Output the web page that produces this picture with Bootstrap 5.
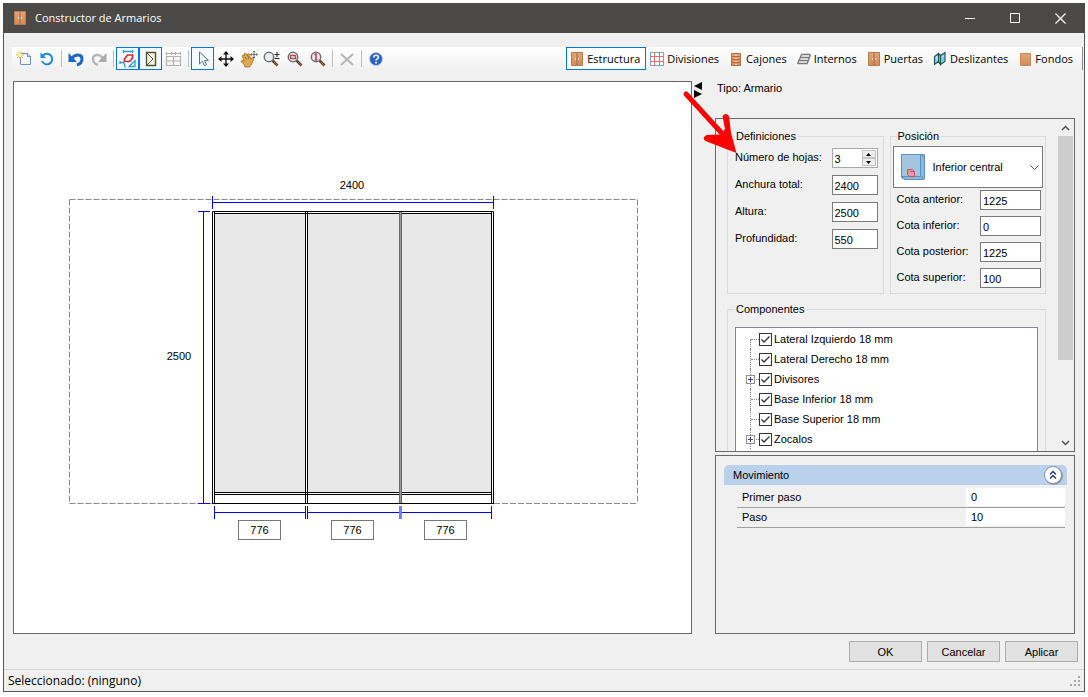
<!DOCTYPE html>
<html lang="es">
<head>
<meta charset="utf-8">
<meta name="viewport" content="width=device-width, initial-scale=1">
<title>Constructor de Armarios</title>
<link href="https://cdn.jsdelivr.net/npm/bootstrap@5.3.0/dist/css/bootstrap.min.css" rel="stylesheet">
<style>
:root{--ui:"Liberation Sans",sans-serif;--bar:"Open Sans","Noto Sans",sans-serif;--face:#f0f0f0;--edge:#686868}
body{font:11px/14px var(--ui);color:#000;background:#fff;padding:3px 3px 5px}
.app-page{height:calc(100vh - 8px);min-height:620px}
.app-window{background:var(--face);border:1px solid #555;border-top:0}
.title-bar{height:30px;margin:0 -1px;background:#4b4a48;color:#fff;font:11px/30px var(--bar);padding-left:10px}
.title-bar button{width:45px;height:30px;border:0;background:none;padding:0;line-height:0}
.title-bar button:last-child{margin-right:2px}
.tool-strip{height:23px;margin:14px 1px 11px 8px;background:linear-gradient(#fff,#f8f8f8 50%,#f0f0f0);font-family:var(--bar);font-size:11px}
.tool{width:23px;height:23px;border:1px solid transparent;background:none;padding:0;line-height:0;display:flex;align-items:center;justify-content:center}
.tool.active{border-color:#0078d7;background:#f5faff}
.sep{width:1px;height:17px;background:#bdbdbd;margin:0 2px 0 3px}
.tab{height:23px;border:1px solid transparent;background:none;padding:0 5px 0 2px;line-height:20px;display:flex;align-items:center;gap:2px;white-space:nowrap}
.tab.active{border-color:#0078d7;background:#fff}
.tab-strip{border-right:1px solid #888;padding-right:3px}
.work{padding:0 9px}
.sketch{background:#fff;border:1px solid var(--edge)}
.sketch svg{width:100%;height:100%;display:block}
.sketch text{font:11px var(--ui);text-anchor:middle}
.width-box{width:43px;height:20px;border:1px solid #777;padding:0;text-align:center;font:11px/16px var(--ui);color:#000;display:block;border-radius:0}
.splitter{width:23px;padding:1px 0 0 1px}
.side{width:360px}
.kind{height:37px;padding-left:2px}
.pane{border:1px solid var(--edge)}
.pane-top{flex:332 1 0;min-height:0}
.pane-bottom{flex:168 1 0;min-height:0;margin-top:3px;padding:9px 7px 0 8px}
.pane-scroll{padding:10px 12px 0 11px;min-width:0}
.scroller{width:15px;margin-right:1px}
.thumb{flex:0 0 224px;background:#cdcdcd}
.scroller button{border:0;background:none;padding:0;height:17px;line-height:0}
.pair{display:grid;grid-template-columns:1fr 1fr;gap:6px}
.group{border:1px solid #dcdcdc;padding:0 5px;margin:0;min-width:0}
.group legend{float:none;width:auto;font-size:11px;line-height:14px;margin:0 0 0 2px;padding:0 2px 0 1px}
.pair .group{height:165px}
.group-pos{padding:0 2px}
.fields{display:grid;gap:7px 0;grid-template-columns:1fr 46px;padding:5px 0 0 2px;align-items:center}
.fields.near{gap:6px 0;grid-template-columns:1fr 61px;padding:2px 2px 0 4px}
.fields label{line-height:16px;padding-bottom:3px}
.box{width:100%;height:20px;border:1px solid #7a7a7a;border-radius:0;background:#fff;padding:1px 2px 0;font-size:11px;color:#000}
.spin{border:1px solid #aaa;background:#fff;height:20px}
.spin .box{border:0;height:18px;width:28px}
.spin-keys{width:14px;margin:1px}
.spin-keys button{flex:1;border:1px solid #c4c4c4;background:#eee;padding:0;line-height:0;display:flex;align-items:center;justify-content:center}
.place{padding-top:3px}
.place select{width:100%;height:42px;border:1px solid #7a7a7a;border-radius:0;background:#fff;appearance:none;padding:0 20px 0 39px;font-size:11px;color:#000}
.place .cube{position:absolute;left:7px;top:10px;pointer-events:none}
.place .chev{position:absolute;right:4px;top:22px;pointer-events:none}
.tree{background:#fff;border:1px solid #828790;height:170px;margin:11px 2px 0;padding:1px 0 0 9px}
.tree li{height:20px;position:relative;display:flex;align-items:center;padding-left:14px}
.tree li::before{content:"";position:absolute;left:5px;top:0;bottom:0;border-left:1px dotted #888}
.tree li:first-child::before{top:10px}
.tree li::after{content:"";position:absolute;left:6px;width:8px;top:10px;border-top:1px dotted #888}
.tree input{appearance:none;width:13px;height:13px;border:1px solid #333;margin:0 2px 0 0;background:#fff}
.tree input:checked{background:#fff url("data:image/svg+xml,%3Csvg xmlns='http://www.w3.org/2000/svg' viewBox='0 0 11 11'%3E%3Cpath d='M1.5 5.5 4 8 9.5 2.5' fill='none' stroke='%23333' stroke-width='1.3'/%3E%3C/svg%3E")}
.tree .plus{position:absolute;left:1px;top:6px;width:9px;height:9px;border:1px solid #919191;background:#fff;padding:0;line-height:0;z-index:1}
.move-head{height:20px;background:#b9d1ea;border-radius:5px 5px 0 0;padding:0 5px 0 9px}
.move-head button{width:18px;height:18px;border:1px solid #8290a8;border-radius:50%;background:#fff;padding:0;line-height:0;box-shadow:1px 1px 1px #9a9a9a}
.props{width:calc(100% - 15px);margin:2px 0 0 13px;border-collapse:collapse}
.props td,.props th{height:20px;padding:0;border-bottom:1px solid #a0a0a0;font-weight:400}
.props th{padding-left:5px}
.props td{width:99px}
.props input{width:100%;height:18px;border:0;background:#fff;padding:0 5px;display:block;color:#000}
.actions{padding:7px 6px 7px 7px;gap:5px}
.actions button{width:73px;height:21px;border:1px solid #adadad;background:#e1e1e1;padding:0;line-height:18px}
.state{border-top:1px solid #d7d7d7;height:22px;padding:0 3px 0 4px;font:12px/20px var(--bar)}
.hint-arrow{position:absolute;left:-35px;top:7px;pointer-events:none;z-index:3}
</style>
</head>
<body>
<svg width="0" height="0" class="position-absolute" aria-hidden="true">
  <defs>
    <linearGradient id="wood" x2="0" y2="1"><stop stop-color="#e5a576"/><stop offset="1" stop-color="#d28b58"/></linearGradient>
    <symbol id="closet" viewBox="0 0 16 16"><path d="M2.500 1.500h11v13h-11z" fill="url(#wood)" stroke="#b87b4c"/><path d="M8 2v12" stroke="#a7693d"/><path d="M6.500 7v2M9.500 7v2" stroke="#f7e6d4"/></symbol>
    <symbol id="lens" viewBox="0 0 16 16"><path d="m9.500 9.500 5 5" stroke="#5a4330" stroke-width="2.600"/><path d="m11 11 3 3" stroke="#9b7143"/><circle cx="6" cy="6" r="4.700" fill="#e8eef2" stroke="#6c7276" stroke-width="1.500"/></symbol>
  </defs>
</svg>
<div class="app-page d-flex flex-column">
<div class="app-window d-flex flex-column flex-grow-1">
  <header class="title-bar d-flex align-items-center">
    <svg width="14" height="16" viewBox="1 0 14 16" class="me-1"><use href="#closet" width="16" height="16"/></svg>
    <span class="flex-grow-1 ps-1">Constructor de Armarios</span>
    <button type="button" aria-label="Minimizar"><svg width="11" height="11"><path d="M0 5.500h10" stroke="#fff"/></svg></button>
    <button type="button" aria-label="Maximizar"><svg width="11" height="11"><path d="M.5.5h9v9h-9z" fill="none" stroke="#fff"/></svg></button>
    <button type="button" aria-label="Cerrar"><svg width="11" height="11"><path d="m.5.5 10 10m0-10-10 10" stroke="#fff" stroke-width="1.200"/></svg></button>
  </header>

  <nav class="tool-strip d-flex justify-content-between">
    <div class="d-flex align-items-center">
      <button class="tool" type="button" aria-label="Nuevo"><svg width="16" height="16"><path d="M4.500 2.500h7l3 3v8h-10z" fill="#f4f8ff" stroke="#6c8fc7"/><path d="M11.500 2.500v3h3" fill="#c8d8f2" stroke="#6c8fc7"/><path d="M4 0v8M0 4h8M1.200 1.200l5.600 5.600m0-5.600-5.600 5.600" stroke="#e3b520" stroke-width=".9"/><circle cx="4" cy="4" r="2" fill="#fff39a"/></svg></button>
      <button class="tool" type="button" aria-label="Restablecer"><svg width="16" height="16"><path d="M4 4.500A5.300 5.300 0 1 1 3 10" fill="none" stroke="#1787dc" stroke-width="1.900"/><path d="M1.500 1.500v5.500h5.500z" fill="#1787dc"/></svg></button>
      <span class="sep"></span>
      <button class="tool" type="button" aria-label="Deshacer"><svg width="16" height="16"><path d="M3.500 8C7 2.500 14 3 14 8c0 3-2 5-5 6" fill="none" stroke="#1c67c4" stroke-width="3"/><path d="M.5 2v9h8.500z" fill="#1c67c4"/></svg></button>
      <button class="tool" type="button" aria-label="Rehacer"><svg width="16" height="16"><path d="M12.500 8C9 2.500 2 3 2 8c0 3 2 5 5 6" fill="none" stroke="#b8b8b8" stroke-width="2.600"/><path d="M15.500 2v9H7z" fill="#aaa"/></svg></button>
      <span class="sep"></span>
      <button class="tool active" type="button" aria-label="Cotas"><svg width="18" height="18"><path d="M4 1.500h10M4.500 0v3M13.500 0v3M1 12.500h3.500l2 5M1 11v3" fill="none" stroke="#2b9fd8" stroke-width="1.300"/><path d="m5.500 9 3-4h5v3l-3 3.500h-5z" fill="#fff" stroke="#d9262d" stroke-width="1.700"/><path d="M10 16.500h6v-6z" fill="none" stroke="#2b9fd8" stroke-width="1.300"/></svg></button>
      <button class="tool active" type="button" aria-label="Apertura"><svg width="16" height="16"><path d="M3.500 1.500h9v13h-9z" fill="#f6f6e8" stroke="#4f552f" stroke-width="1.400"/><path d="m4 2 6 6-6 6" fill="none" stroke="#4f552f"/></svg></button>
      <button class="tool" type="button" aria-label="Vista de rejilla"><svg width="17" height="16"><path d="M1.500 5.500h14v9h-14zM1.500 10h14M8.500 5.500v9M1 2.500h15M1.500 1v3M6.500 1v3M10.500 1v3M15.500 1v3" fill="none" stroke="#b2b2b2" stroke-width="1.200"/></svg></button>
      <span class="sep"></span>
      <button class="tool active" type="button" aria-label="Seleccionar"><svg width="16" height="16"><path d="M4.500 1v12l3-2.800 2 4.500 2-.9-2-4.400h4z" fill="#f5faff" stroke="#59708f"/></svg></button>
      <button class="tool" type="button" aria-label="Mover"><svg width="16" height="16"><path d="M8 1v14M1 8h14" stroke="#111" stroke-width="1.400"/><path d="m8 0 3 3.500H5zM8 16l3-3.500H5zM0 8l3.500-3v6zM16 8l-3.500-3v6z" fill="#111"/></svg></button>
      <button class="tool" type="button" aria-label="Desplazar"><svg width="18" height="18"><path d="M3 8 2 6q1-1.500 2.500 0L4 4q1.500-1.500 2.500 0l1 2V4q1.500-1 2.200.5L10.500 9l2-1.500q2 0 1.200 1.500l-2 5-2 3H5L4 14.500l-3-3q0-2 3-.5z" fill="#dfa653" stroke="#a87833" stroke-width=".9"/><path d="m5 7 1.500 2.500M8 6l.8 3" stroke="#8b5f27" stroke-width=".8"/><path d="M14 1v7M10.500 4.500h7M12.800 2.200 14 1l1.200 1.200M12.800 6.800 14 8l1.200-1.200M11.700 3.300l-1.200 1.200 1.200 1.200M16.300 3.300l1.200 1.200-1.200 1.200" fill="none" stroke="#555" stroke-width=".8"/></svg></button>
      <button class="tool" type="button" aria-label="Zoom"><svg width="17" height="16"><use href="#lens" width="16" height="16"/><path d="M11.500 3.500h5M14 1v5M11.500 7.500h5" stroke="#222"/></svg></button>
      <button class="tool" type="button" aria-label="Zoom de ventana"><svg width="16" height="16"><use href="#lens" width="16" height="16"/><path d="M3.500 4.500h5v3h-5z" fill="none" stroke="#c64545" stroke-width="1.300"/></svg></button>
      <button class="tool" type="button" aria-label="Zoom 1:1"><svg width="16" height="16"><use href="#lens" width="16" height="16"/><path d="m4.500 4 1.500-1v6M4.500 9h3" fill="none" stroke="#e04040" stroke-width="1.600"/></svg></button>
      <span class="sep"></span>
      <button class="tool" type="button" aria-label="Eliminar"><svg width="16" height="16"><path d="m2 3 12 11M14 3 2 14" stroke="#b4b4b4" stroke-width="1.800"/></svg></button>
      <span class="sep"></span>
      <button class="tool" type="button" aria-label="Ayuda"><svg width="16" height="16"><circle cx="8" cy="8" r="6.500" fill="#2862c5" stroke="#b6cbed"/><path d="M5.800 6.500q0-2.200 2.300-2.200t2.300 2q0 1-1.200 1.700T8 9.500" fill="none" stroke="#fff" stroke-width="1.600"/><path d="M7.200 10.800h1.700v1.600H7.200z" fill="#fff"/></svg></button>
    </div>
    <div class="tab-strip d-flex">
      <button class="tab active" type="button"><svg width="16" height="16"><use href="#closet"/></svg>Estructura</button>
      <button class="tab" type="button"><svg width="16" height="16"><path d="M1.500 1.500h13v13h-13z" fill="#fff" stroke="#72a9d8"/><path d="M5.500 1v14M10.500 1v14M1 5.500h14M1 10.500h14" stroke="#e06e72"/></svg>Divisiones</button>
      <button class="tab" type="button"><svg width="16" height="16"><path d="M3.500 2.500h9v12h-9zM3 5.500h10M3 8.500h10M3 11.500h10" fill="url(#wood)" stroke="#b07245"/><path d="M7 4.500h2M7 7.500h2M7 10.500h2M7 13.500h2" stroke="#f4d9be"/></svg>Cajones</button>
      <button class="tab" type="button"><svg width="16" height="16"><path d="M5.500 3.500h9M4.500 6.500h9M3.500 9.500h9M2 12.500h9M5.500 3.500l-4 9.500M14.500 3.500l-3.500 9.500" fill="none" stroke="#777" stroke-width="1.300"/></svg>Internos</button>
      <button class="tab" type="button"><svg width="16" height="16"><use href="#closet"/></svg>Puertas</button>
      <button class="tab" type="button"><svg width="16" height="16"><path d="m2.500 5.500 4-3v8l-4 3zM6.500 2.500l2 2v9l-2-3zM8.500 4.500l4.500-3v9l-4.500 3z" fill="#6fd2e2" stroke="#254a52" stroke-width="1.100"/><path d="m3.800 6.500 1.200-1v4M10 6l1.500-1" stroke="#d9fbff" fill="none"/></svg>Deslizantes</button>
      <button class="tab" type="button"><svg width="16" height="16"><path d="M3.500 2.500h10v12h-10z" fill="url(#wood)" stroke="#c98a5b"/></svg>Fondos</button>
    </div>
  </nav>

  <main class="work d-flex flex-grow-1">
    <section class="sketch flex-grow-1" aria-label="Vista frontal">
      <svg viewBox="14 82 677 551">
        <g fill="none" stroke="#888" stroke-dasharray="6 2">
          <path d="M69.500 199.500h568M69.500 199.500v304M637.500 199.500v304M69.500 503.500h143M494 503.500h144"/>
        </g>
        <path d="M212.500 211.500h281v292h-281z" fill="#fff" stroke="#000"/>
        <g fill="#e8e8e8"><path d="M215 214h90v278h-90zM308 214h91v278h-91zM402 214h89v278h-89z"/></g>
        <path d="M214 213.500h278M214 492.500h278M214 494.500h278M214.500 212v291M305.500 212v291M307.500 212v291M491.500 212v291M212 503.500h282" fill="none" stroke="#000"/>
        <path d="M400.500 212v291" stroke="#6a6a6a" stroke-width="3"/><path d="M400.500 212v291" stroke="#999"/>
        <path d="M212.500 202.500h281M212.500 196v13M493.500 196v13M203.500 211v292M198 211.500h12M198 503.500h12M214 512.500h278M214.500 506v13M305.500 506v13M307.500 506v13M491.500 506v13" fill="none" stroke="#00f"/>
        <path d="M306.500 506v13" stroke="#fff"/><path d="M400.500 506v13" stroke="#7d7dff" stroke-width="3"/>
        <text x="352" y="189">2400</text>
        <text x="179" y="360">2500</text>
        <foreignObject x="238" y="520" width="43" height="20"><input class="width-box" aria-label="Hueco 1" value="776"></foreignObject>
        <foreignObject x="331" y="520" width="43" height="20"><input class="width-box" aria-label="Hueco 2" value="776"></foreignObject>
        <foreignObject x="424" y="520" width="43" height="20"><input class="width-box" aria-label="Hueco 3" value="776"></foreignObject>
      </svg>
    </section>
    <div class="splitter flex-shrink-0"><svg width="10" height="16"><path d="M9 0v8L1 4zM1 8v8l8-4z"/></svg></div>
    <aside class="side flex-shrink-0 d-flex flex-column position-relative">
      <svg class="hint-arrow" width="64" height="72" viewBox="680 88 64 72"><path d="m686 94 42 46" stroke="#fe0000" stroke-width="5" stroke-linecap="round"/><path d="M722.500 116q3.500-4 6.500 0l2 17 5.500 20-31-12q-4-3 1-6l14-.5 4.500-5.500z" fill="#fe0000"/></svg>
      <div class="kind">Tipo: Armario</div>
      <section class="pane pane-top d-flex overflow-hidden">
        <div class="pane-scroll flex-grow-1 overflow-hidden">
          <div class="pair">
            <fieldset class="group">
              <legend>Definiciones</legend>
              <div class="fields">
                <label for="leaves">Número de hojas:</label>
                <div class="spin d-flex">
                  <input class="box" id="leaves" value="3">
                  <div class="spin-keys d-flex flex-column">
                    <button type="button" aria-label="Más"><svg width="5" height="3"><path d="M0 3h5L2.500 0z"/></svg></button>
                    <button type="button" aria-label="Menos"><svg width="5" height="3"><path d="M0 0h5L2.500 3z"/></svg></button>
                  </div>
                </div>
                <label for="total">Anchura total:</label><input class="box" id="total" value="2400">
                <label for="high">Altura:</label><input class="box" id="high" value="2500">
                <label for="deep">Profundidad:</label><input class="box" id="deep" value="550">
              </div>
            </fieldset>
            <fieldset class="group group-pos">
              <legend class="ms-1">Posición</legend>
              <div class="place position-relative">
                <select aria-label="Posición"><option>Inferior central</option></select>
                <svg class="cube" width="26" height="28"><path d="m1.500 2.500 3-1h20v22l-3 3h-17l-3-2z" fill="#8db9dc" stroke="#5d92bf"/><path d="M1.500 1.500h19v22h-19z" fill="#a4c4e2" stroke="#5d92bf"/><path d="m20.500 1.500 4 3v21l-4-2M1.500 23.500l4 3h19" fill="none" stroke="#5d92bf"/><path d="M7.500 16.500h5l2 2v5h-5l-2-2z" fill="#e79aa3" stroke="#c8505c"/><path d="M9.500 18.500h5" stroke="#c8505c"/></svg>
                <svg class="chev" width="9" height="6"><path d="m.5.5 4 4 4-4" fill="none" stroke="#555"/></svg>
              </div>
              <div class="fields near">
                <label for="front">Cota anterior:</label><input class="box" id="front" value="1225">
                <label for="low">Cota inferior:</label><input class="box" id="low" value="0">
                <label for="back">Cota posterior:</label><input class="box" id="back" value="1225">
                <label for="top">Cota superior:</label><input class="box" id="top" value="100">
              </div>
            </fieldset>
          </div>
          <fieldset class="group mt-2">
            <legend>Componentes</legend>
            <ul class="tree list-unstyled">
              <li><input type="checkbox" id="c1" checked><label for="c1">Lateral Izquierdo 18 mm</label></li>
              <li><input type="checkbox" id="c2" checked><label for="c2">Lateral Derecho 18 mm</label></li>
              <li><button class="plus" type="button" aria-label="Expandir Divisores"><svg width="7" height="7"><path d="M1 3.500h5M3.500 1v5" stroke="#2b4a9b"/></svg></button><input type="checkbox" id="c3" checked><label for="c3">Divisores</label></li>
              <li><input type="checkbox" id="c4" checked><label for="c4">Base Inferior 18 mm</label></li>
              <li><input type="checkbox" id="c5" checked><label for="c5">Base Superior 18 mm</label></li>
              <li><button class="plus" type="button" aria-label="Expandir Zocalos"><svg width="7" height="7"><path d="M1 3.500h5M3.500 1v5" stroke="#2b4a9b"/></svg></button><input type="checkbox" id="c6" checked><label for="c6">Zocalos</label></li>
            </ul>
          </fieldset>
        </div>
        <div class="scroller d-flex flex-column flex-shrink-0">
          <button type="button" aria-label="Subir"><svg width="9" height="6"><path d="m1 5 3.500-3.500L8 5" fill="none" stroke="#505050" stroke-width="1.500"/></svg></button>
          <div class="thumb"></div>
          <button type="button" class="mt-auto" aria-label="Bajar"><svg width="9" height="6"><path d="m1 1 3.500 3.500L8 1" fill="none" stroke="#505050" stroke-width="1.500"/></svg></button>
        </div>
      </section>
      <section class="pane pane-bottom">
        <div class="move-head d-flex align-items-center justify-content-between">Movimiento
          <button type="button" aria-label="Contraer"><svg width="10" height="10"><path d="m2 4.500 3-3 3 3M2 8.500l3-3 3 3" fill="none" stroke="#1c2f6b" stroke-width="1.300"/></svg></button>
        </div>
        <table class="props">
          <tr><th scope="row"><label for="first">Primer paso</label></th><td><input id="first" value="0"></td></tr>
          <tr><th scope="row"><label for="step">Paso</label></th><td><input id="step" value="10"></td></tr>
        </table>
      </section>
    </aside>
  </main>

  <div class="actions d-flex justify-content-end">
    <button type="button">OK</button>
    <button type="button">Cancelar</button>
    <button type="button">Aplicar</button>
  </div>
  <footer class="state d-flex justify-content-between align-items-end">
    <span>Seleccionado: (ninguno)</span>
    <svg width="11" height="11" class="mb-1" fill="#a5a5a5"><path d="M8 0h2v2H8zM4 4h2v2H4zM8 4h2v2H8zM0 8h2v2H0zM4 8h2v2H4zM8 8h2v2H8z"/></svg>
  </footer>
</div>
</div>
<script src="https://cdn.jsdelivr.net/npm/bootstrap@5.3.0/dist/js/bootstrap.bundle.min.js"></script>
</body>
</html>
